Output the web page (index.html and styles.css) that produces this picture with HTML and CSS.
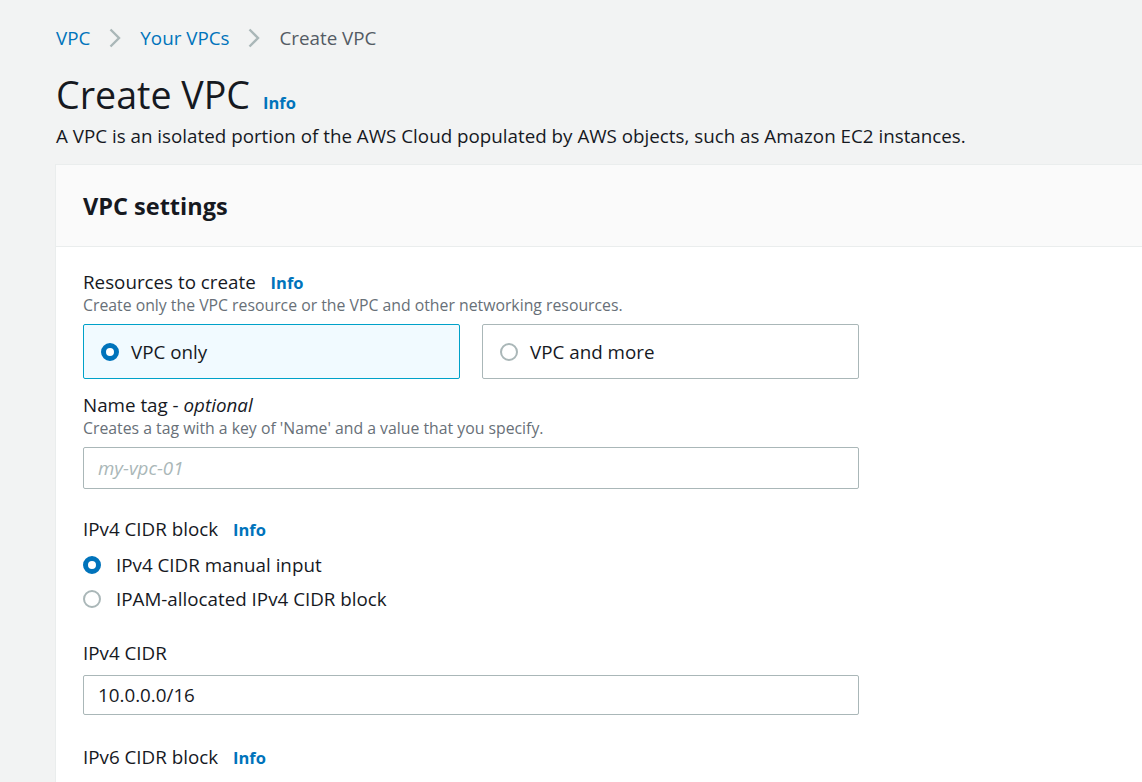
FILE: index.html
```html
<!DOCTYPE html>
<html>
<head>
<meta charset="utf-8">
<link rel="stylesheet" href="styles.css">
</head>
<body>
<div class="page">
  <nav class="crumbs">
    <a class="crumb-link">VPC</a>
    <svg class="chev" width="14" height="20" viewBox="0 0 14 20"><path d="M2.5 1.5 L11 10 L2.5 18.5" fill="none" stroke="#aab7b8" stroke-width="2.4"/></svg>
    <a class="crumb-link">Your VPCs</a>
    <svg class="chev" width="14" height="20" viewBox="0 0 14 20"><path d="M2.5 1.5 L11 10 L2.5 18.5" fill="none" stroke="#aab7b8" stroke-width="2.4"/></svg>
    <span class="crumb-current">Create VPC</span>
  </nav>
  <div class="title-row">
    <h1 class="title">Create VPC</h1>
    <a class="info">Info</a>
  </div>
  <p class="lead">A VPC is an isolated portion of the AWS Cloud populated by AWS objects, such as Amazon EC2 instances.</p>

  <section class="card">
    <header class="card-head"><h2 class="card-title">VPC settings</h2></header>
    <div class="card-body">
      <div class="field f-resources">
        <div class="label">Resources to create <a class="info">Info</a></div>
        <div class="desc">Create only the VPC resource or the VPC and other networking resources.</div>
        <div class="tiles">
          <div class="tile selected"><span class="radio on"></span><span>VPC only</span></div>
          <div class="tile"><span class="radio"></span><span>VPC and more</span></div>
        </div>
      </div>
      <div class="field f-name">
        <div class="label">Name tag - <em>optional</em></div>
        <div class="desc">Creates a tag with a key of 'Name' and a value that you specify.</div>
        <div class="input placeholder">my-vpc-01</div>
      </div>
      <div class="field f-block">
        <div class="label">IPv4 CIDR block <a class="info">Info</a></div>
        <div class="radios">
          <div class="radio-row"><span class="radio on"></span><span>IPv4 CIDR manual input</span></div>
          <div class="radio-row"><span class="radio"></span><span>IPAM-allocated IPv4 CIDR block</span></div>
        </div>
      </div>
      <div class="field f-cidr">
        <div class="label">IPv4 CIDR</div>
        <div class="input short">10.0.0.0/16</div>
      </div>
      <div class="field f-v6">
        <div class="label">IPv6 CIDR block <a class="info">Info</a></div>
        <div class="radios">
          <div class="radio-row"><span class="radio"></span></div>
        </div>
      </div>
    </div>
  </section>
</div>
</body>
</html>
```
FILE: styles.css
```css
html, body { margin: 0; padding: 0; }
body {
  background: #f2f3f3;
  font-family: "Open Sans", "Noto Sans", sans-serif;
  color: #16191f;
  overflow: hidden;
  height: 782px;
}
.page { padding: 24px 0 0 56px; }
.crumbs {
  display: flex;
  align-items: center;
  gap: 18px;
  font-size: 18.8px;
  height: 28px;
}
.crumb-link { color: #0073bb; }
.crumb-current { color: #545b64; }
.chev { display: block; }
.title-row {
  display: flex;
  align-items: baseline;
  gap: 13px;
  margin-top: 19px;
}
.title {
  margin: 0;
  font-size: 37.6px;
  font-weight: 400;
  line-height: 48px;
}
.info {
  color: #0073bb;
  font-weight: 700;
  font-size: 16.5px;
}
.lead {
  margin: 4px 0 0 0;
  font-size: 18.8px;
  line-height: 26px;
}
.card {
  margin-top: 15px;
  margin-left: -1px;
  background: #fff;
  border-left: 1px solid #eaeded;
  border-top: 1px solid #eaeded;
}
.card-head {
  background: #fafafa;
  border-bottom: 1px solid #eaeded;
  height: 81px;
  display: flex;
  align-items: center;
  padding-left: 27px;
}
.card-title {
  margin: 0;
  font-size: 23.5px;
  font-weight: 700;
}
.card-body {
  padding: 23px 0 0 27px;
  width: 776px;
}
.label {
  font-size: 18.8px;
  line-height: 24px;
}
.label .info { margin-left: 10px; }
.desc {
  font-size: 15.8px;
  color: #687078;
  line-height: 22px;
}
.f-resources .desc { line-height: 20px; }
.tiles {
  display: grid;
  grid-template-columns: 1fr 1fr;
  gap: 22px;
  margin-top: 9px;
}
.tile {
  height: 53px;
  border: 1px solid #aab7b8;
  border-radius: 2px;
  display: flex;
  align-items: center;
  gap: 12px;
  padding-left: 17px;
  font-size: 18.8px;
}
.tile.selected {
  background: #f1faff;
  border-color: #00a1c9;
}
.f-name { margin-top: 14px; }
.f-block { margin-top: 28px; }
.f-cidr { margin-top: 25px; }
.f-v6 { margin-top: 30px; }
.radio {
  width: 18px;
  height: 18px;
  border: 2px solid #aab7b8;
  border-radius: 50%;
  box-sizing: border-box;
  flex: none;
  background: #fff;
}
.radio.on {
  border: 5px solid #0073bb;
}
.input {
  margin-top: 8px;
  height: 40px;
  border: 1px solid #aab7b8;
  border-radius: 2px;
  background: #fff;
  display: flex;
  align-items: center;
  padding-left: 14px;
  font-size: 18.8px;
}
.input.short { height: 38px; margin-top: 10px; }
.placeholder { color: #aab7b8; font-style: italic; }
.radios { margin-top: 6px; }
.radio-row {
  display: flex;
  align-items: center;
  gap: 15px;
  height: 34px;
  font-size: 18.8px;
}
```
